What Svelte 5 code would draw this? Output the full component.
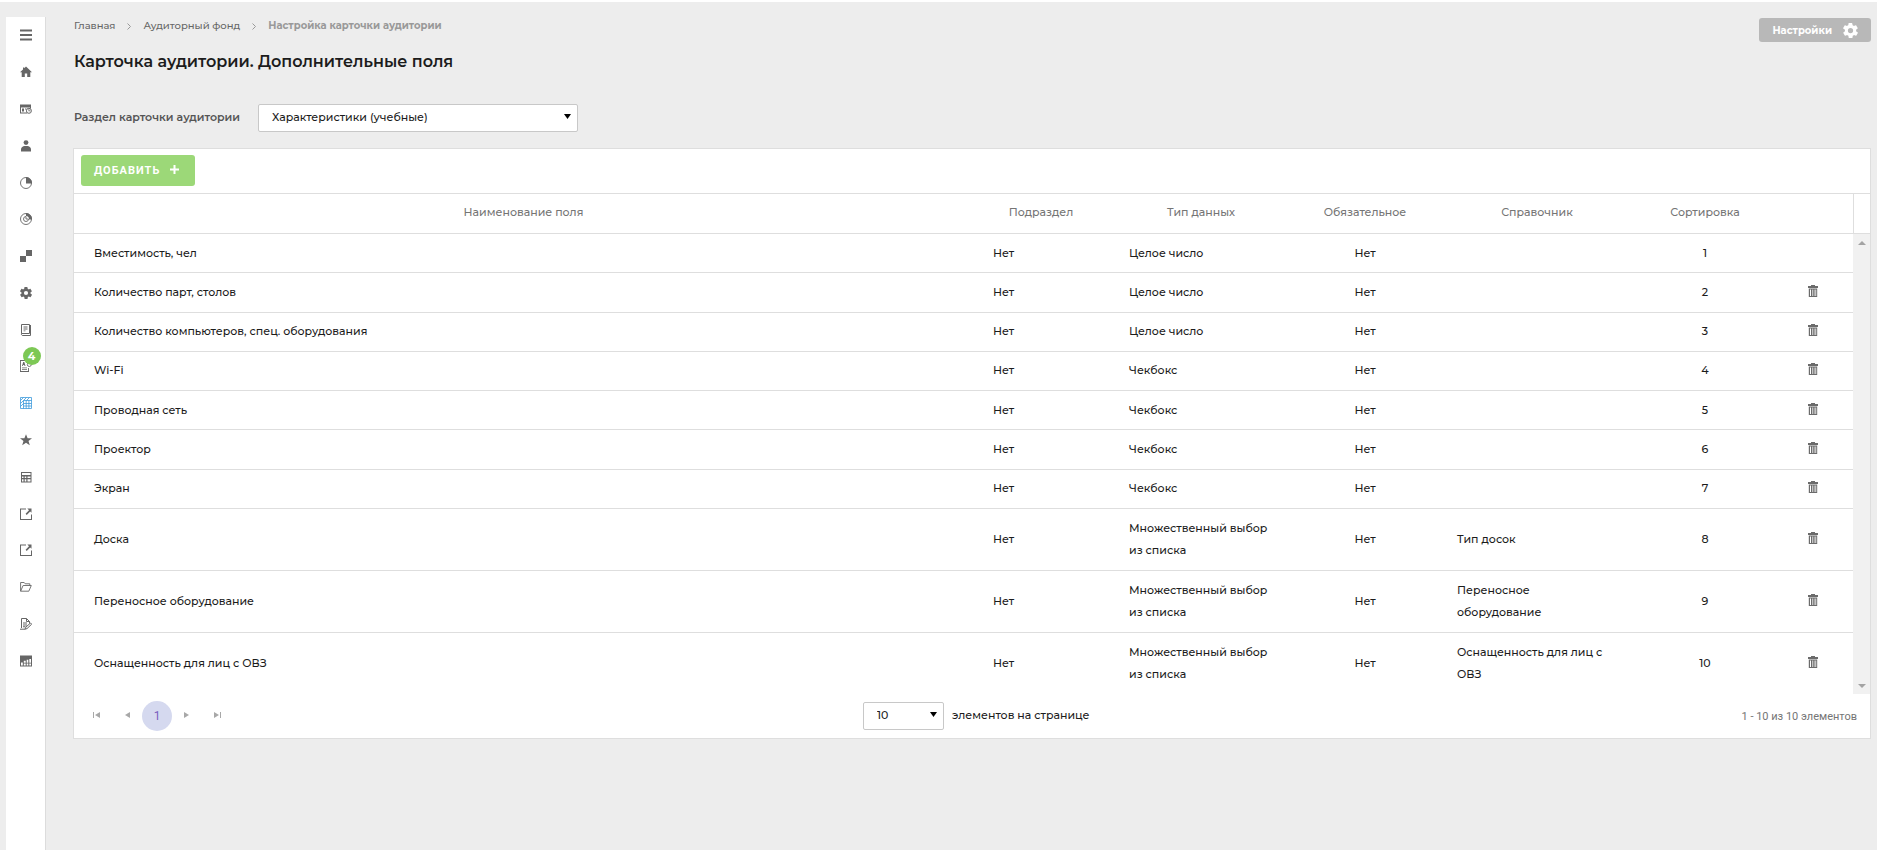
<script lang="ts">
    interface FieldRow {
        name: string;
        subsection: string;
        type: string;
        required: string;
        dictionary?: string;
        order: number;
        locked?: boolean;
    }

    const menu = [
        { icon: 'menu', label: 'Меню' },
        { icon: 'home', label: 'Главная' },
        { icon: 'schedule', label: 'Расписание' },
        { icon: 'person', label: 'Персоны' },
        { icon: 'pie', label: 'Отчеты' },
        { icon: 'target', label: 'Показатели' },
        { icon: 'squares', label: 'Структура' },
        { icon: 'gear', label: 'Настройки' },
        { icon: 'book', label: 'Журнал' },
        { icon: 'requests', label: 'Заявки', badge: 4 },
        { icon: 'building', label: 'Аудиторный фонд', active: true },
        { icon: 'star', label: 'Избранное' },
        { icon: 'calc', label: 'Расчеты' },
        { icon: 'external', label: 'Внешний портал' },
        { icon: 'external', label: 'Внешний ресурс' },
        { icon: 'folder', label: 'Документы' },
        { icon: 'edit', label: 'Редактор' },
        { icon: 'chart', label: 'Статистика' }
    ];

    const sections = ['Характеристики (учебные)', 'Характеристики (общие)'];
    const pageSizes = [10, 20, 50];

    let section = $state(sections[0]);
    let pageSize = $state(10);
    let rows = $state<FieldRow[]>([
        { name: 'Вместимость, чел', subsection: 'Нет', type: 'Целое число', required: 'Нет', order: 1, locked: true },
        { name: 'Количество парт, столов', subsection: 'Нет', type: 'Целое число', required: 'Нет', order: 2 },
        { name: 'Количество компьютеров, спец. оборудования', subsection: 'Нет', type: 'Целое число', required: 'Нет', order: 3 },
        { name: 'Wi-Fi', subsection: 'Нет', type: 'Чекбокс', required: 'Нет', order: 4 },
        { name: 'Проводная сеть', subsection: 'Нет', type: 'Чекбокс', required: 'Нет', order: 5 },
        { name: 'Проектор', subsection: 'Нет', type: 'Чекбокс', required: 'Нет', order: 6 },
        { name: 'Экран', subsection: 'Нет', type: 'Чекбокс', required: 'Нет', order: 7 },
        { name: 'Доска', subsection: 'Нет', type: 'Множественный выбор из списка', required: 'Нет', dictionary: 'Тип досок', order: 8 },
        { name: 'Переносное оборудование', subsection: 'Нет', type: 'Множественный выбор из списка', required: 'Нет', dictionary: 'Переносное оборудование', order: 9 },
        { name: 'Оснащенность для лиц с ОВЗ', subsection: 'Нет', type: 'Множественный выбор из списка', required: 'Нет', dictionary: 'Оснащенность для лиц с ОВЗ', order: 10 }
    ]);

    function removeRow(order: number) {
        rows = rows.filter((r) => r.order !== order);
    }
</script>

{#snippet gearShape()}
    <path
        fill-rule="evenodd"
        d="M19.4 13c0-.3.1-.6.1-1s0-.7-.1-1l2.1-1.600c.2-.2.3-.4.1-.7l-2-3.400c-.1-.2-.4-.3-.6-.2l-2.500 1a7 7 0 0 0-1.700-1l-.4-2.600a.5.5 0 0 0-.5-.4h-4c-.2 0-.5.2-.5.4l-.4 2.600a7 7 0 0 0-1.700 1l-2.500-1c-.2-.1-.5 0-.6.2l-2 3.400c-.1.2-.1.5.1.7L4.600 11a8 8 0 0 0 0 2l-2.100 1.600c-.2.2-.3.4-.1.7l2 3.400c.1.2.4.3.6.2l2.500-1a7 7 0 0 0 1.700 1l.4 2.600c0 .2.3.4.5.4h4c.2 0 .5-.2.5-.4l.4-2.600a7 7 0 0 0 1.700-1l2.500 1c.2.1.5 0 .6-.2l2-3.400c.1-.2.1-.5-.1-.7zM12 15.500a3.500 3.500 0 1 1 0-7 3.500 3.500 0 0 1 0 7z"
    />
{/snippet}

{#snippet menuIcon(name: string)}
    <svg class="menu-icon" viewBox="0 0 12 12" fill="currentColor" aria-hidden="true">
        {#if name === 'menu'}
            <path d="M0 .5h12v2H0zM0 5h12v2H0zM0 9.500h12v2H0z" />
        {:else if name === 'home'}
            <path d="M6 .5 12 6.200h-1.700V11H7.200V7.500H4.800V11H1.700V6.200H0L3 3.400V1.500h1.300v.7z" />
        {:else if name === 'schedule'}
            <path fill-rule="evenodd" d="M0 1.500h11v4h-1V4.500H1v5h6v1H0zM2 5.500h2v3H2zM5 5.500h1.500v1H5z" />
            <circle cx="8.900" cy="7.800" r="2.500" fill="none" stroke="currentColor" />
            <path d="M8.500 6h.8v1.500h1.200v.8h-2z" />
        {:else if name === 'person'}
            <circle cx="6" cy="2.600" r="2.400" />
            <path d="M1 11.500V9.200C1 7.500 3 6.200 4.500 6h3C9 6.200 11 7.500 11 9.200v2.300z" />
        {:else if name === 'pie'}
            <circle cx="6" cy="6" r="5.500" fill="none" stroke="currentColor" stroke-width=".9" />
            <path d="M6 0a6 6 0 0 1 6 6.500H6z" />
        {:else if name === 'target'}
            <circle cx="6" cy="6" r="5.500" fill="none" stroke="currentColor" stroke-width=".9" />
            <path d="M6 0a6 6 0 0 1 6 6.500H9A3 3 0 0 0 6 3z" />
            <path d="M8.500 6A2.500 2.500 0 1 1 6 3.500V6z" fill="none" stroke="currentColor" stroke-width=".9" />
        {:else if name === 'squares'}
            <path d="M6 0h6v6H6zM0 6h6v6H0z" />
        {:else if name === 'gear'}
            <svg viewBox="2 2 20 20" width="12" height="12">{@render gearShape()}</svg>
        {:else if name === 'book'}
            <path fill="none" stroke="currentColor" d="M1.500.5h8v9h-8zM1.500 9.500v1.200l.8.8h8.200V1" />
            <path d="M3.500 2.500h4v1h-4zM3.500 4.500h4v1h-4zM3.500 6.500h2v.8h-2z" />
        {:else if name === 'requests'}
            <path d="M0 0h6v.9H.9v10.200h7.200V8H9v4H0z" />
            <path d="M2 6 3.200 2h1.100L5.500 6h-1l-.2-.9H3.200L2.900 6zM2 7.500h5v.8H2zM2 9.300h5v.8H2z" />
            <circle cx="9.300" cy="4.500" r="2" fill="none" stroke="currentColor" stroke-width=".9" />
        {:else if name === 'building'}
            <path
                fill="none"
                stroke="currentColor"
                stroke-width=".8"
                d="M.5.5h11v11H.5zM3.500 3.500v8M6.200 3.500v8M8.900 3.500v8M.5 3.500l3-3M.5 6.500l3-3M.5 9.500l3-3M3.500 3.500h8M3.500 6.500h8M3.500 9h8M3.500 3.500l3-3M6.500 3.500l3-3"
            />
        {:else if name === 'star'}
            <path d="m6 .3 1.600 4H12L8.500 6.900l1.300 4.400L6 8.700l-3.800 2.600 1.300-4.400L0 4.300h4.400z" />
        {:else if name === 'calc'}
            <path fill-rule="evenodd" d="M1 1h10.500v10.500H1zm1 1v2h8.500V2zm0 3.500v1.400h1.500V5.500zm2.700 0v1.400h1.600V5.500zm2.800 0v1.400h3V5.500zM2 8.200v2.300h1.500V8.200zm2.700 0v2.300h1.600V8.200zm2.800 0v2.300h3V8.200z" />
        {:else if name === 'external'}
            <path d="M0 .5h6v1H1v9.500h10V6.500h1V12H0z" />
            <path d="M7.300.5H11.500v4.200L10.200 3.400 6.700 6.900 5.600 5.800l3.400-3.500z" />
        {:else if name === 'folder'}
            <path fill="none" stroke="currentColor" stroke-width=".9" d="M.6 10.200V1.500h3.600l1 1.300h4.600v1.700M.6 10.200h8.200l2.500-5.700H3.100z" />
        {:else if name === 'edit'}
            <path fill="none" stroke="currentColor" d="M1.500 10V.5h5l3 3v2M6.500.5v3h3" />
            <path d="M3 4.500h4v1H3zM3 6.500h4v1H3zM3 8.300h2.500v.9H3z" />
            <path fill="none" stroke="currentColor" d="M5 11.200l.8-2L10.500 5l1.200 1.200L7 10.600zM0 11.200h5" />
        {:else if name === 'chart'}
            <path fill-rule="evenodd" d="M0 .5h12v11H0zM1 7.500v3h1.800v-3zm2.800-1.700v1.900h1.900V5.800zm0 2.800v1.900h1.900V8.600zM6.700 4.800v2.900h1.600V4.800zm0 3.800v1.900h1.600V8.600zM9.300 4v3.700H11V4zm0 4.600v1.900H11V8.600z" />
        {/if}
    </svg>
{/snippet}

{#snippet caret()}
    <svg class="caret" viewBox="0 0 7 5" aria-hidden="true"><path d="M0 0h7L3.500 5z" /></svg>
{/snippet}

{#snippet columns()}
    <colgroup>
        <col />
        <col class="col-sub" />
        <col class="col-type" />
        <col class="col-req" />
        <col class="col-dict" />
        <col class="col-order" />
        <col class="col-actions" />
    </colgroup>
{/snippet}

<div class="page">
    <nav class="sidebar" aria-label="Основное меню">
        <ul>
            {#each menu as item}
                <li>
                    <a href="#menu" class:active={item.active} aria-label={item.label}>
                        {@render menuIcon(item.icon)}
                        {#if item.badge}
                            <span class="badge">{item.badge}</span>
                        {/if}
                    </a>
                </li>
            {/each}
        </ul>
    </nav>

    <main>
        <header>
            <div>
                <nav class="breadcrumbs" aria-label="Навигация">
                    <a href="#home">Главная</a>
                    <svg viewBox="0 0 4 7" aria-hidden="true"><path d="m.5.5 3 3-3 3" /></svg>
                    <a href="#rooms">Аудиторный фонд</a>
                    <svg viewBox="0 0 4 7" aria-hidden="true"><path d="m.5.5 3 3-3 3" /></svg>
                    <span>Настройка карточки аудитории</span>
                </nav>
                <h1>Карточка аудитории. Дополнительные поля</h1>
            </div>
            <button class="settings" type="button">
                Настройки
                <svg viewBox="2 2 20 20" fill="currentColor" aria-hidden="true">{@render gearShape()}</svg>
            </button>
        </header>

        <div class="filter">
            <label for="section">Раздел карточки аудитории</label>
            <div class="select select-section">
                <select id="section" bind:value={section}>
                    {#each sections as option}
                        <option value={option}>{option}</option>
                    {/each}
                </select>
                {@render caret()}
            </div>
        </div>

        <section class="grid">
            <div class="toolbar">
                <button class="add" type="button">
                    ДОБАВИТЬ
                    <svg viewBox="0 0 9 9" aria-hidden="true"><path d="M3.500 0h2v3.500H9v2H5.500V9h-2V5.500H0v-2h3.500z" /></svg>
                </button>
            </div>

            <div class="grid-header">
                <table>
                    {@render columns()}
                    <thead>
                        <tr>
                            <th>Наименование поля</th>
                            <th>Подраздел</th>
                            <th>Тип данных</th>
                            <th>Обязательное</th>
                            <th>Справочник</th>
                            <th>Сортировка</th>
                            <th></th>
                        </tr>
                    </thead>
                </table>
                <div class="scroll-gap"></div>
            </div>

            <div class="grid-body">
                <table>
                    {@render columns()}
                    <tbody>
                        {#each rows as row (row.order)}
                            <tr>
                                <td>{row.name}</td>
                                <td>{row.subsection}</td>
                                <td>{row.type}</td>
                                <td class="center">{row.required}</td>
                                <td>{row.dictionary ?? ''}</td>
                                <td class="center">{row.order}</td>
                                <td class="center">
                                    {#if !row.locked}
                                        <button class="remove" type="button" aria-label="Удалить" onclick={() => removeRow(row.order)}>
                                            <svg viewBox="0 0 10 12" aria-hidden="true">
                                                <path fill-rule="evenodd" d="M3 1V0h4v1h3v2H0V1zM.8 3.500h8.400V12H.8zM2 4.500V11h1V4.500zm2.200 0V11h.6V4.500zm1.600 0V11h.6V4.500zM7.400 4.500V11h.8V4.500z" />
                                            </svg>
                                        </button>
                                    {/if}
                                </td>
                            </tr>
                        {/each}
                    </tbody>
                </table>
                <div class="scrollbar">
                    <button type="button" aria-label="Вверх">
                        <svg viewBox="0 0 8 4" aria-hidden="true"><path d="M0 4h8L4 0z" /></svg>
                    </button>
                    <button type="button" aria-label="Вниз">
                        <svg viewBox="0 0 8 4" aria-hidden="true"><path d="M0 0h8L4 4z" /></svg>
                    </button>
                </div>
            </div>

            <footer>
                <div class="pager">
                    <button type="button" aria-label="Первая страница">
                        <svg viewBox="0 0 8 6" aria-hidden="true"><path d="M0 0h1v6H0zM7 0v6L2 3z" /></svg>
                    </button>
                    <button type="button" aria-label="Предыдущая страница">
                        <svg viewBox="0 0 8 6" aria-hidden="true"><path d="M7 0v6L2 3z" /></svg>
                    </button>
                    <button class="current" type="button">1</button>
                    <button type="button" aria-label="Следующая страница">
                        <svg viewBox="0 0 8 6" aria-hidden="true"><path d="M1 0v6l5-3z" /></svg>
                    </button>
                    <button type="button" aria-label="Последняя страница">
                        <svg viewBox="0 0 8 6" aria-hidden="true"><path d="M7 0h1v6H7zM1 0v6l5-3z" /></svg>
                    </button>
                </div>
                <div class="page-size">
                    <div class="select select-size">
                        <select id="page-size" bind:value={pageSize}>
                            {#each pageSizes as size}
                                <option value={size}>{size}</option>
                            {/each}
                        </select>
                        {@render caret()}
                    </div>
                    <label for="page-size">элементов на странице</label>
                </div>
                <div class="summary">1 - 10 из 10 элементов</div>
            </footer>
        </section>
    </main>
</div>

<style>
    :global(body) {
        background: #ededed;
    }

    .page {
        box-sizing: border-box;
        display: flex;
        min-height: 100vh;
        padding: 0 6px;
        border-top: 2px solid #fff;
        font-family: Montserrat, Inter, sans-serif;
        font-size: 11px;
        font-weight: 500;
        color: #1c1c1c;
    }

    button {
        border: none;
        padding: 0;
        background: none;
        cursor: pointer;
    }

    svg {
        display: block;
    }

    .sidebar {
        flex: none;
        width: 39px;
        margin-top: 15px;
        background: #fff;
        border-right: 1px solid #dcdcdc;
    }

    .sidebar ul {
        display: flex;
        flex-direction: column;
        height: 662px;
        margin: 0;
        padding: 0;
        list-style: none;
    }

    .sidebar li {
        flex: 1;
        display: flex;
        align-items: center;
        justify-content: center;
    }

    .sidebar a {
        position: relative;
        color: #666;
    }

    .sidebar a.active {
        color: #3d9bdc;
    }

    .menu-icon {
        width: 12px;
        height: 12px;
    }

    .badge {
        position: absolute;
        left: 3px;
        top: -13px;
        width: 18px;
        border-radius: 9px;
        background: #7dc855;
        color: #fff;
        font-size: 11px;
        font-weight: 700;
        line-height: 18px;
        text-align: center;
    }

    main {
        flex: 1;
        min-width: 0;
        padding-left: 27px;
    }

    header {
        display: flex;
        justify-content: space-between;
        align-items: flex-start;
        padding: 16px 0 0 1px;
    }

    .breadcrumbs {
        display: flex;
        align-items: center;
        gap: 12px;
        font-size: 10px;
        line-height: 16px;
        color: #999;
    }

    .breadcrumbs a {
        color: #666;
        text-decoration: none;
    }

    .breadcrumbs span {
        font-weight: 700;
    }

    .breadcrumbs svg {
        width: 4px;
        height: 7px;
        fill: none;
        stroke: #999;
    }

    h1 {
        margin: 17px 0 0;
        font-size: 16px;
        font-weight: 600;
        line-height: 22px;
    }

    .settings {
        display: flex;
        align-items: center;
        gap: 11px;
        height: 24px;
        padding: 0 13px;
        border-radius: 3px;
        background: #b8b8b8;
        color: #fff;
        font-family: inherit;
        font-size: 10px;
        font-weight: 700;
    }

    .settings svg {
        width: 15px;
        height: 15px;
    }

    .filter {
        display: flex;
        align-items: center;
        gap: 18px;
        margin: 31px 0 16px;
        padding-left: 1px;
    }

    .filter label {
        padding-bottom: 2px;
        font-weight: 600;
        color: #555;
    }

    .select {
        position: relative;
    }

    .select select {
        box-sizing: border-box;
        width: 100%;
        height: 28px;
        padding: 0 13px 2px;
        appearance: none;
        border: 1px solid #c8c8c8;
        border-radius: 2px;
        background: #fff;
        color: inherit;
        font: inherit;
    }

    .select-section {
        width: 320px;
    }

    .select-size {
        width: 81px;
    }

    .caret {
        position: absolute;
        right: 7px;
        top: 10px;
        width: 7px;
        height: 5px;
        pointer-events: none;
    }

    .grid {
        border: 1px solid #dedede;
        background: #fff;
    }

    .toolbar {
        padding: 6px 7px 7px;
        border-bottom: 1px solid #dedede;
    }

    .add {
        display: flex;
        align-items: center;
        gap: 10px;
        height: 31px;
        padding: 0 16px 0 13px;
        border-radius: 3px;
        background: #9cd878;
        color: #fff;
        font-family: Roboto, sans-serif;
        font-size: 11px;
        font-weight: 700;
        letter-spacing: 1px;
    }

    .add svg {
        width: 9px;
        height: 9px;
        margin-bottom: 3px;
        fill: #fff;
    }

    .grid-header,
    .grid-body {
        display: flex;
    }

    .grid-header {
        border-bottom: 1px solid #dedede;
    }

    .scroll-gap {
        box-sizing: border-box;
        flex: none;
        width: 17px;
        border-left: 1px solid #dedede;
    }

    table {
        flex: 1;
        width: 100%;
        min-width: 0;
        table-layout: fixed;
        border-collapse: separate;
        border-spacing: 0;
    }

    .col-sub,
    .col-order {
        width: 136px;
    }

    .col-type {
        width: 184px;
    }

    .col-req {
        width: 144px;
    }

    .col-dict {
        width: 200px;
    }

    .col-actions {
        width: 80px;
    }

    th {
        box-sizing: border-box;
        height: 39px;
        padding: 0 20px 4px;
        font-weight: 500;
        color: #757575;
    }

    .grid-body {
        height: 460px;
    }

    .grid-body table {
        height: 100%;
    }

    td {
        padding: 7px 20px 8px;
        border-bottom: 1px solid #dedede;
        line-height: 22px;
    }

    tr:last-child td {
        border-bottom: none;
    }

    .center {
        text-align: center;
    }

    .remove {
        display: block;
        margin: 0 auto;
        padding-bottom: 2px;
    }

    .remove svg {
        width: 10px;
        height: 12px;
        fill: #6b6b6b;
    }

    .scrollbar {
        flex: none;
        display: flex;
        flex-direction: column;
        justify-content: space-between;
        width: 17px;
        background: #f1f1f1;
    }

    .scrollbar button {
        height: 17px;
    }

    .scrollbar svg {
        width: 8px;
        height: 4px;
        margin: 0 auto;
        fill: #a3a3a3;
    }

    footer {
        display: grid;
        grid-template-columns: 44% auto 1fr;
        align-items: center;
        height: 44px;
        padding: 0 13px 0 8px;
    }

    .pager {
        display: flex;
        align-items: center;
    }

    .pager button {
        width: 30px;
        height: 30px;
        border-radius: 50%;
    }

    .pager svg {
        width: 8px;
        height: 6px;
        margin: 0 auto;
        padding-bottom: 3px;
        fill: #a8a8a8;
    }

    .pager .current {
        background: #d5d9ef;
        color: #7a5fc0;
        font-family: Roboto, sans-serif;
        font-size: 12px;
    }

    .page-size {
        display: flex;
        align-items: center;
        gap: 8px;
    }

    .page-size label {
        padding-bottom: 2px;
    }

    .summary {
        text-align: right;
        font-family: Roboto, sans-serif;
        font-size: 11px;
        font-weight: 400;
        color: #757575;
    }
</style>
